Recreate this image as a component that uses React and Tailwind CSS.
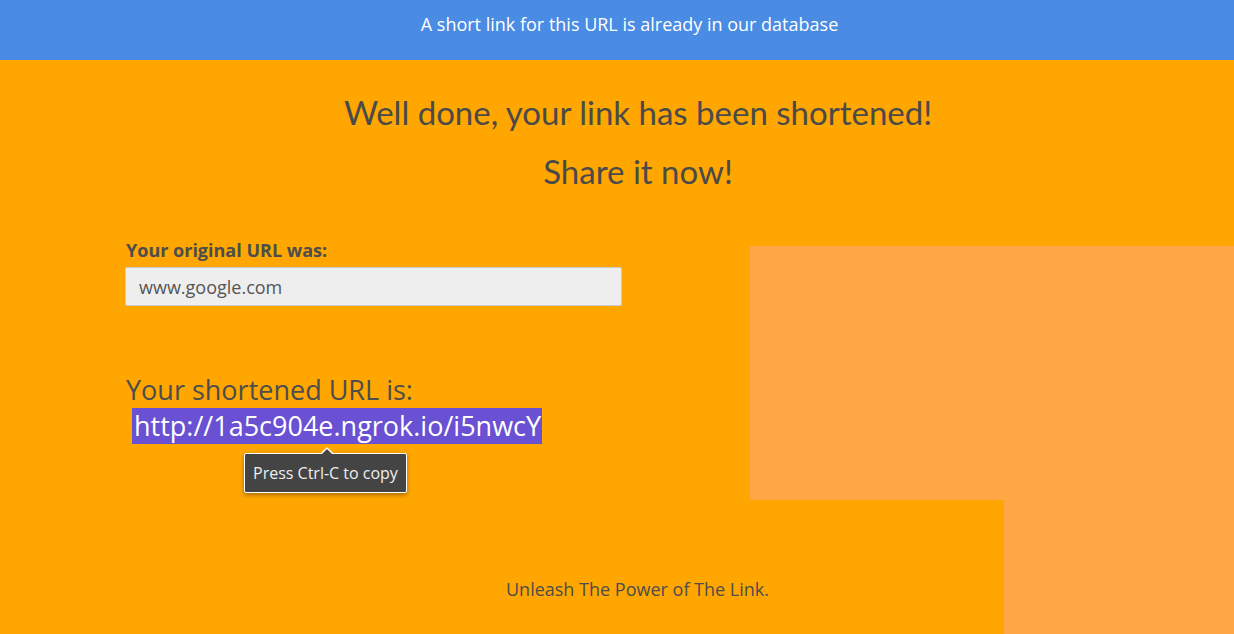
export default function App() {
  return (
    <div className="relative h-[634px] overflow-hidden bg-[#ffa600] text-[#4d4d4d] flex flex-col" style={{ fontFamily: '"Open Sans", "Liberation Sans", sans-serif' }}>
      {/* Decorative background blocks */}
      <div className="absolute left-[750px] top-[246px] right-0 h-[254px] bg-[#ffa746]" />
      <div className="absolute left-[1004px] top-[500px] right-0 bottom-0 bg-[#ffa746]" />

      {/* Notice bar */}
      <div className="relative h-[60px] shrink-0 bg-[#4a8be3] text-white text-[18px] text-center pt-[11px] pl-[25px]">
        A short link for this URL is already in our database
      </div>

      <main className="relative flex flex-col flex-1">
        {/* Heading */}
        <div className="flex flex-col items-center text-[33px] text-[#4a4a4a] pt-[31px] pl-[42px] gap-[17px]" style={{ fontFamily: 'Lato, "Open Sans", sans-serif' }}>
          <h1 className="leading-[42px]">Well done, your link has been shortened!</h1>
          <h2 className="leading-[42px]">Share it now!</h2>
        </div>

        <div className="flex flex-col items-start pl-[125px] pt-[46px]">
          <label className="text-[18px] font-bold leading-[24px] pl-[1px]">Your original URL was:</label>
          <input
            readOnly
            value="www.google.com"
            className="mt-[5px] w-[497px] h-[39px] bg-[#eeeeee] border border-[#cccccc] rounded-[2px] px-[13px] text-[18px] text-[#555555] outline-none"
          />

          <div className="mt-[67px] text-[27px] leading-[34px] pl-[1px]">Your shortened URL is:</div>
          <div className="relative mt-[1px] ml-[7px]">
            <span className="block bg-[#6a50d3] text-white text-[27px] leading-[36px] pl-[2px] pr-[1px]">
              http://1a5c904e.ngrok.io/i5nwcY
            </span>
            {/* Tooltip */}
            <div className="absolute left-[112px] top-[45px] bg-[#444444] border border-white rounded-[2px] text-[#eeeeee] text-[16px] leading-[20px] px-[8px] py-[9px] whitespace-nowrap shadow-[0_2px_4px_rgba(0,0,0,0.35)]">
              <span className="absolute -top-[7px] left-[75px] w-0 h-0 border-l-[7px] border-r-[7px] border-b-[7px] border-l-transparent border-r-transparent border-b-white" />
              <span className="absolute -top-[5px] left-[76px] w-0 h-0 border-l-[6px] border-r-[6px] border-b-[6px] border-l-transparent border-r-transparent border-b-[#444444]" />
              Press Ctrl-C to copy
            </div>
          </div>
        </div>

        <footer className="mt-auto pb-[32px] pl-[41px] text-center text-[18px] leading-[26px]">
          Unleash The Power of The Link.
        </footer>
      </main>
    </div>
  );
}
